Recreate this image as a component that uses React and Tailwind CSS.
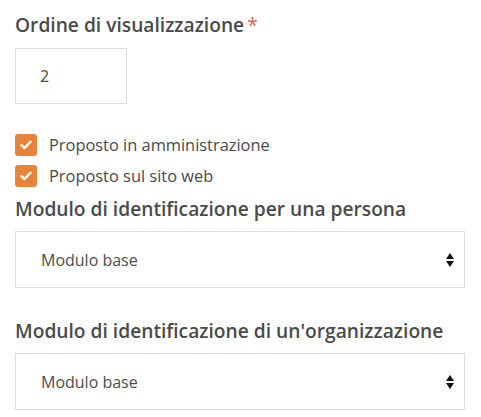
import React from "react";

const Check = () => (
  <span className="w-[22px] h-[22px] rounded-[3px] bg-[#e8843a] grid place-items-center shrink-0">
    <svg width="12" height="10" viewBox="0 0 12 10" fill="none">
      <path d="M1.5 5.2 4.5 8 10.5 1.8" stroke="#fff" strokeWidth="2.4" strokeLinecap="round" strokeLinejoin="round" />
    </svg>
  </span>
);

const Arrows = () => (
  <svg width="8" height="14" viewBox="0 0 8 14" className="shrink-0">
    <path d="M4 0 8 6H0z" fill="#111" />
    <path d="M4 14 0 8h8z" fill="#111" />
  </svg>
);

const SelectBox = ({ value }) => (
  <div className="h-[57px] w-[450px] border border-[#d9dce8] flex items-center justify-between pl-[25px] pr-[10px] text-[16px] text-[#4d4d4d]">
    <span>{value}</span>
    <Arrows />
  </div>
);

export default function App() {
  return (
    <div className="bg-white min-h-screen px-[15px] pt-[12px] text-[#4a4a4a] font-['Open_Sans',sans-serif]">
      <div className="text-[19.2px] font-semibold leading-[26px] flex items-start">
        Ordine di visualizzazione
        <span className="text-[#e85a5a] ml-[3px] font-normal">*</span>
      </div>
      <div className="mt-[10px] w-[112px] h-[56px] border border-[#d9dce8] flex items-center pl-[24px] text-[16px]">
        2
      </div>
      <div className="mt-[30px] flex flex-col gap-[9px] text-[16.4px] leading-[22px]">
        <label className="flex items-center gap-[12px]">
          <Check />
          <span>Proposto in amministrazione</span>
        </label>
        <label className="flex items-center gap-[12px]">
          <Check />
          <span>Proposto sul sito web</span>
        </label>
      </div>
      <div className="mt-[9px] text-[19.2px] font-semibold leading-[26px]">
        Modulo di identificazione per una persona
      </div>
      <div className="mt-[9px]">
        <SelectBox value="Modulo base" />
      </div>
      <div className="mt-[30px] text-[19.2px] font-semibold leading-[26px]">
        Modulo di identificazione di un'organizzazione
      </div>
      <div className="mt-[9px]">
        <SelectBox value="Modulo base" />
      </div>
    </div>
  );
}
